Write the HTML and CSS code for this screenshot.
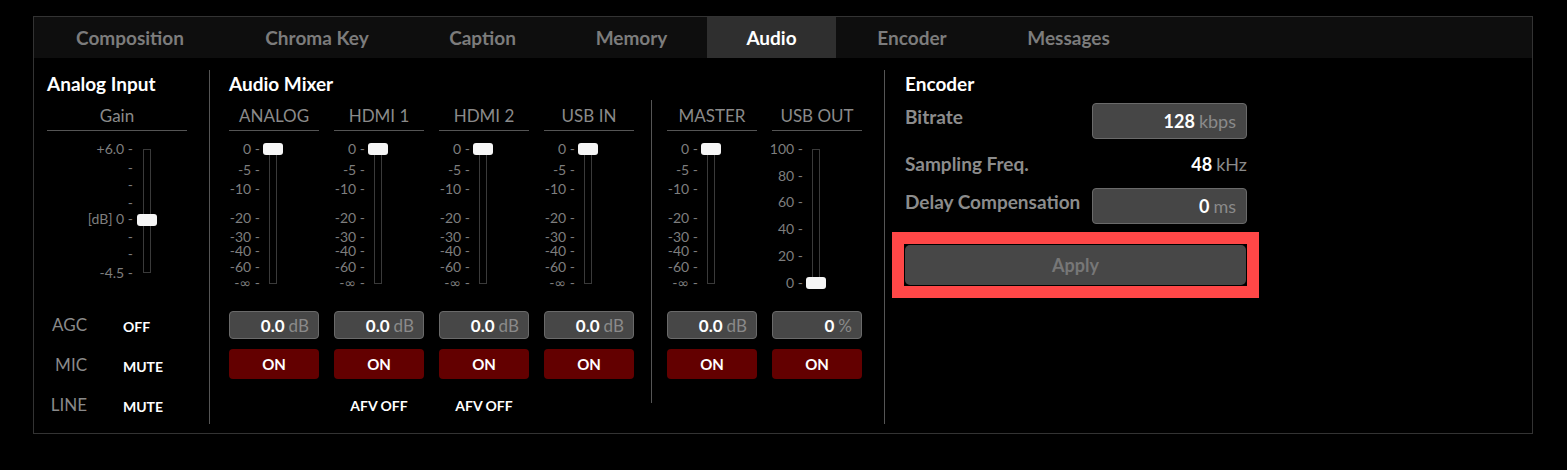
FILE: index.html
```html
<!DOCTYPE html>
<html>
<head>
<meta charset="utf-8">
<link rel="stylesheet" href="styles.css">
</head>
<body>
<div class="panel">
  <div class="tabs">
    <div class="tab t1">Composition</div>
    <div class="tab t2">Chroma Key</div>
    <div class="tab t3">Caption</div>
    <div class="tab t4">Memory</div>
    <div class="tab t5 active">Audio</div>
    <div class="tab t6">Encoder</div>
    <div class="tab t7">Messages</div>
  </div>
  <div class="content">
    <section class="analog">
      <h2 class="title">Analog Input</h2>
      <div class="chan-head">Gain</div>
      <div class="fader">
        <span class="tick gtick" style="top:10px">+6.0 -</span>
        <span class="tick gtick" style="top:29px">-</span>
        <span class="tick gtick" style="top:46px">-</span>
        <span class="tick gtick" style="top:64px">-</span>
        <span class="tick gtick" style="top:80px">[dB] 0 -</span>
        <span class="tick gtick" style="top:98px">-</span>
        <span class="tick gtick" style="top:115px">-</span>
        <span class="tick gtick" style="top:134px">-4.5 -</span>
        <div class="track gtrack"></div>
        <div class="thumb gthumb" style="top:83px"></div>
      </div>
      <div class="switches">
        <div class="sw-row"><span class="sw-label">AGC</span><span class="sw-val">OFF</span></div>
        <div class="sw-row"><span class="sw-label">MIC</span><span class="sw-val">MUTE</span></div>
        <div class="sw-row"><span class="sw-label">LINE</span><span class="sw-val">MUTE</span></div>
      </div>
    </section>
    <div class="vsep"></div>
    <section class="mixer">
      <h2 class="title">Audio Mixer</h2>
      <div class="mixer-row">
        <div class="group g1">
          <div class="chan">
            <div class="chan-head">ANALOG</div>
            <div class="fader">
              <span class="tick" style="top:10px">0 -</span><span class="tick" style="top:31px">-5 -</span><span class="tick" style="top:50px">-10 -</span><span class="tick" style="top:79px">-20 -</span><span class="tick" style="top:98px">-30 -</span><span class="tick" style="top:112px">-40 -</span><span class="tick" style="top:128px">-60 -</span><span class="tick" style="top:144px">-<span class="inf">∞</span> -</span>
              <div class="track"></div><div class="thumb" style="top:12px"></div>
            </div>
            <div class="vbox"><b>0.0</b><span class="unit">dB</span></div>
            <div class="onbtn">ON</div>
          </div>
          <div class="chan">
            <div class="chan-head">HDMI 1</div>
            <div class="fader">
              <span class="tick" style="top:10px">0 -</span><span class="tick" style="top:31px">-5 -</span><span class="tick" style="top:50px">-10 -</span><span class="tick" style="top:79px">-20 -</span><span class="tick" style="top:98px">-30 -</span><span class="tick" style="top:112px">-40 -</span><span class="tick" style="top:128px">-60 -</span><span class="tick" style="top:144px">-<span class="inf">∞</span> -</span>
              <div class="track"></div><div class="thumb" style="top:12px"></div>
            </div>
            <div class="vbox"><b>0.0</b><span class="unit">dB</span></div>
            <div class="onbtn">ON</div>
            <div class="afv">AFV OFF</div>
          </div>
          <div class="chan">
            <div class="chan-head">HDMI 2</div>
            <div class="fader">
              <span class="tick" style="top:10px">0 -</span><span class="tick" style="top:31px">-5 -</span><span class="tick" style="top:50px">-10 -</span><span class="tick" style="top:79px">-20 -</span><span class="tick" style="top:98px">-30 -</span><span class="tick" style="top:112px">-40 -</span><span class="tick" style="top:128px">-60 -</span><span class="tick" style="top:144px">-<span class="inf">∞</span> -</span>
              <div class="track"></div><div class="thumb" style="top:12px"></div>
            </div>
            <div class="vbox"><b>0.0</b><span class="unit">dB</span></div>
            <div class="onbtn">ON</div>
            <div class="afv">AFV OFF</div>
          </div>
          <div class="chan">
            <div class="chan-head">USB IN</div>
            <div class="fader">
              <span class="tick" style="top:10px">0 -</span><span class="tick" style="top:31px">-5 -</span><span class="tick" style="top:50px">-10 -</span><span class="tick" style="top:79px">-20 -</span><span class="tick" style="top:98px">-30 -</span><span class="tick" style="top:112px">-40 -</span><span class="tick" style="top:128px">-60 -</span><span class="tick" style="top:144px">-<span class="inf">∞</span> -</span>
              <div class="track"></div><div class="thumb" style="top:12px"></div>
            </div>
            <div class="vbox"><b>0.0</b><span class="unit">dB</span></div>
            <div class="onbtn">ON</div>
          </div>
        </div>
        <div class="vsep inner"></div>
        <div class="group g2">
          <div class="chan">
            <div class="chan-head">MASTER</div>
            <div class="fader">
              <span class="tick" style="top:10px">0 -</span><span class="tick" style="top:31px">-5 -</span><span class="tick" style="top:50px">-10 -</span><span class="tick" style="top:79px">-20 -</span><span class="tick" style="top:98px">-30 -</span><span class="tick" style="top:112px">-40 -</span><span class="tick" style="top:128px">-60 -</span><span class="tick" style="top:144px">-<span class="inf">∞</span> -</span>
              <div class="track"></div><div class="thumb" style="top:12px"></div>
            </div>
            <div class="vbox"><b>0.0</b><span class="unit">dB</span></div>
            <div class="onbtn">ON</div>
          </div>
          <div class="chan">
            <div class="chan-head">USB OUT</div>
            <div class="fader">
              <span class="tick" style="top:10px">100 -</span><span class="tick" style="top:37px">80 -</span><span class="tick" style="top:63px">60 -</span><span class="tick" style="top:90px">40 -</span><span class="tick" style="top:117px">20 -</span><span class="tick" style="top:144px">0 -</span>
              <div class="track"></div><div class="thumb" style="top:146px"></div>
            </div>
            <div class="vbox"><b>0</b><span class="unit">%</span></div>
            <div class="onbtn">ON</div>
          </div>
        </div>
      </div>
    </section>
    <div class="vsep"></div>
    <section class="encoder">
      <h2 class="title">Encoder</h2>
      <div class="enc-row box-row first">
        <span class="enc-label">Bitrate</span>
        <div class="ebox"><b>128</b><span class="unit">kbps</span></div>
      </div>
      <div class="enc-row plain-row">
        <span class="enc-label">Sampling Freq.</span>
        <div class="evalue"><b>48</b><span class="unit">kHz</span></div>
      </div>
      <div class="enc-row box-row">
        <span class="enc-label">Delay Compensation</span>
        <div class="ebox"><b>0</b><span class="unit">ms</span></div>
      </div>
      <div class="apply-wrap">
        <div class="apply">Apply</div>
      </div>
    </section>
  </div>
</div>
</body>
</html>
```

FILE: styles.css
```css
body {
  margin: 0;
  background: #000;
  padding: 16px 0 0 33px;
  font-family: Lato, "Noto Sans", sans-serif;
}

.panel {
  width: 1500px;
  height: 418px;
  box-sizing: border-box;
  border: 1px solid #333;
  display: flex;
  flex-direction: column;
}

.tabs {
  height: 41px;
  flex: none;
  background: #0e0e0e;
  display: flex;
  padding-left: 1px;
}

.tab {
  display: flex;
  align-items: center;
  justify-content: center;
  font-weight: 700;
  font-size: 19px;
  color: #7c7c7c;
}
.t1 { width: 190px; }
.t2 { width: 184px; }
.t3 { width: 147px; }
.t4 { width: 151px; }
.t5 { width: 129px; }
.t6 { width: 152px; }
.t7 { width: 161px; }

.tab.active {
  background: #2f2f2f;
  color: #fff;
}

.content {
  flex: 1;
  display: flex;
  padding: 12px 0 13px 13px;
}

.vsep {
  width: 1px;
  background: #555;
  flex: none;
}

.title {
  margin: 0;
  font-size: 19px;
  font-weight: 700;
  color: #fff;
  line-height: 28px;
  height: 28px;
}

/* Analog input */
.analog {
  width: 140px;
  margin-right: 22px;
}

.chan-head {
  margin-top: 2px;
  height: 31px;
  box-sizing: border-box;
  padding-top: 2px;
  line-height: 28px;
  border-bottom: 1px solid #555;
  text-align: center;
  color: #8a8a8a;
  font-size: 17px;
}

.fader {
  position: relative;
  height: 168px;
}

.tick {
  position: absolute;
  right: 59px;
  font-size: 14px;
  line-height: 16px;
  color: #7e7e7e;
  white-space: nowrap;
}

.inf {
  font-family: "DejaVu Sans", sans-serif;
  font-size: 14px;
}

.track {
  position: absolute;
  left: 40px;
  top: 18px;
  width: 8px;
  height: 135px;
  border: 1px solid #3a3a3a;
  box-sizing: border-box;
}

.thumb {
  position: absolute;
  left: 34px;
  width: 20px;
  height: 12px;
  border-radius: 3px;
  background: #f6f6f6;
}

.gtick { right: 54px; }
.gtrack { left: 96px; height: 124px; }
.gthumb { left: 90px; }

.switches {
  margin-top: 5px;
}

.sw-row {
  height: 40px;
  display: flex;
  align-items: center;
}

.sw-label {
  width: 40px;
  text-align: right;
  color: #8a8a8a;
  font-size: 17px;
}

.sw-val {
  margin-left: 36px;
  margin-top: 4px;
  color: #fff;
  font-weight: 700;
  font-size: 14px;
}

/* Mixer */
.mixer {
  margin-left: 19px;
  margin-right: 22px;
}

.mixer-row {
  display: flex;
  margin-top: 2px;
}

.mixer-row .chan-head {
  margin-top: 0;
}

.group {
  display: flex;
  gap: 15px;
}

.vsep.inner {
  height: 303px;
  margin: 0 15px 0 17px;
}

.chan {
  width: 90px;
}

.vbox {
  margin-top: 12px;
  height: 28px;
  box-sizing: border-box;
  border: 1px solid #6a6a6a;
  border-radius: 4px;
  background: #474747;
  display: flex;
  justify-content: flex-end;
  align-items: center;
  padding-right: 9px;
  gap: 4px;
  font-size: 17px;
}

.vbox b, .ebox b, .evalue b {
  color: #fff;
  font-weight: 700;
}

.unit {
  color: #8a8a8a;
}

.onbtn {
  margin-top: 10px;
  height: 30px;
  background: #630000;
  border-radius: 4px;
  color: #fff;
  font-weight: 700;
  font-size: 15px;
  display: flex;
  align-items: center;
  justify-content: center;
}

.afv {
  margin-top: 17px;
  line-height: 20px;
  height: 20px;
  text-align: center;
  color: #fff;
  font-weight: 700;
  font-size: 14px;
}

/* Encoder */
.encoder {
  margin-left: 20px;
  width: 342px;
}

.enc-row {
  display: flex;
  justify-content: space-between;
}

.enc-row.first {
  margin-top: 5px;
}

.box-row {
  height: 36px;
  align-items: flex-start;
}

.plain-row {
  height: 49px;
  align-items: center;
}

.enc-label {
  color: #8c8c8c;
  font-weight: 700;
  font-size: 19px;
  line-height: 28px;
}

.ebox {
  width: 155px;
  height: 36px;
  box-sizing: border-box;
  border: 1px solid #6a6a6a;
  border-radius: 4px;
  background: #464646;
  display: flex;
  justify-content: flex-end;
  align-items: center;
  gap: 4px;
  padding-right: 10px;
  font-size: 18px;
}

.evalue {
  display: flex;
  gap: 4px;
  font-size: 18px;
}

.apply-wrap {
  margin: 8px 0 0 -13px;
  width: 367px;
  height: 66px;
  box-sizing: border-box;
  border: 12px solid #ff4747;
  padding: 1px;
  background: #000;
}

.apply {
  height: 40px;
  background: #474747;
  border-radius: 5px;
  color: #777;
  font-weight: 700;
  font-size: 18px;
  display: flex;
  align-items: center;
  justify-content: center;
}
```
